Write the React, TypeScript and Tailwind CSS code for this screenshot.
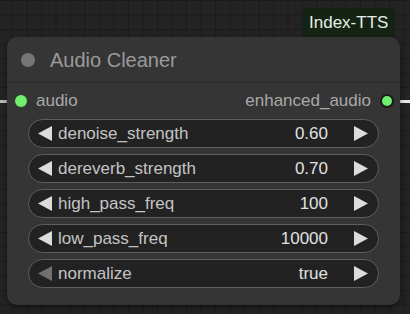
import React from 'react';

interface Widget {
  name: string;
  value: string;
  dimLeft?: boolean;
}

const widgets: Widget[] = [
  { name: 'denoise_strength', value: '0.60' },
  { name: 'dereverb_strength', value: '0.70' },
  { name: 'high_pass_freq', value: '100' },
  { name: 'low_pass_freq', value: '10000' },
  { name: 'normalize', value: 'true', dimLeft: true },
];

const Arrow: React.FC<{ dir: 'left' | 'right'; dim?: boolean }> = ({ dir, dim }) => (
  <svg width="15" height="15" viewBox="0 0 15 15" className="shrink-0">
    <polygon
      points={dir === 'left' ? '15,0 15,15 1,7.5' : '0,0 0,15 14,7.5'}
      fill={dim ? '#707070' : '#dcdcdc'}
    />
  </svg>
);

const App: React.FC = () => {
  return (
    <div
      className="relative w-[410px] h-[314px] overflow-hidden bg-[#232323] bg-[linear-gradient(to_right,#1b1b1b_1px,transparent_1px),linear-gradient(to_bottom,#1b1b1b_1px,transparent_1px)] bg-[size:14.5px_14.5px] bg-[position:12px_0px]"
      style={{ fontFamily: '"Liberation Sans", Arial, sans-serif' }}
    >
      {/* wires */}
      <div className="absolute left-0 top-[100px] w-[9px] h-[3px] bg-[#b8b8b8]" />
      <div className="absolute left-[398px] top-[100px] w-[12px] h-[3px] bg-[#e8e8e8]" />

      {/* group badge */}
      <div className="absolute left-[302px] top-[8px] h-[29px] px-[7px] flex items-center bg-[#152315] rounded-t-[4px] text-[17px] text-[#e4eee4]">
        Index-TTS
      </div>

      {/* node */}
      <div className="absolute left-[7px] top-[37px] w-[393px] h-[268px] bg-[#353535] rounded-[10px] shadow-[0_2px_4px_rgba(0,0,0,0.5)] flex flex-col">
        <div className="h-[46px] flex items-center border-b border-[#2c2c2c] shrink-0">
          <div className="ml-[14px] w-[14px] h-[14px] rounded-full bg-[#767676]" />
          <span className="ml-[15px] text-[20px] text-[#9a9a9a]">Audio Cleaner</span>
        </div>

        <div className="h-[36px] flex items-center justify-between text-[17px] text-[#a8a8a8] shrink-0">
          <div className="flex items-center">
            <div className="ml-[8px] w-[12px] h-[12px] rounded-full bg-[#6ef06e]" />
            <span className="ml-[9px]">audio</span>
          </div>
          <div className="flex items-center">
            <span className="mr-[9px]">enhanced_audio</span>
            <div className="mr-[6px] w-[14px] h-[14px] rounded-full bg-[#6ef06e] border-2 border-[#1c1c1c]" />
          </div>
        </div>

        <div className="px-[21px] flex flex-col gap-[6px]">
          {widgets.map(w => (
            <div
              key={w.name}
              className="h-[29px] flex items-center rounded-full bg-[#222222] border border-[#5e5e5e] text-[17px]"
            >
              <div className="ml-[8px]">
                <Arrow dir="left" dim={w.dimLeft} />
              </div>
              <span className="ml-[6px] text-[#c4c4c4]">{w.name}</span>
              <span className="ml-auto text-[#e0e0e0]">{w.value}</span>
              <div className="ml-[26px] mr-[9px]">
                <Arrow dir="right" />
              </div>
            </div>
          ))}
        </div>
      </div>
    </div>
  );
};

export default App;
